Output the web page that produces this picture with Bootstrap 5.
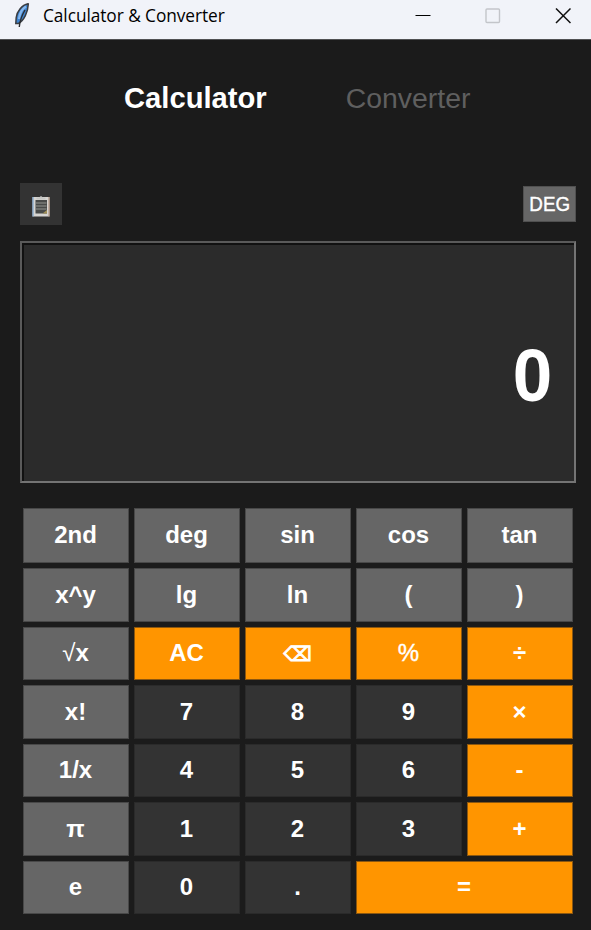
<!DOCTYPE html>
<html lang="en">
<head>
<meta charset="utf-8">
<meta name="viewport" content="width=device-width, initial-scale=1">
<title>Calculator &amp; Converter</title>
<link href="https://cdn.jsdelivr.net/npm/bootstrap@5.3.0/dist/css/bootstrap.min.css" rel="stylesheet">
<style>
  body { background: #1b1b1b; font-family: "Liberation Sans", Arial, sans-serif; color: #fff; }
  .window { height: 930px; overflow: hidden; }
  .titlebar { height: 40px; background: #f1f3f9; border-bottom: 1px solid #505154; color: #000; padding: 0 20px 8px 13px; }
  .app-title { font: 17.3px/30px "Open Sans", "Segoe UI", sans-serif; margin-left: 12px; white-space: nowrap; letter-spacing: -.06px; }
  .controls { gap: 54px; }
  .tabs { height: 58px; margin-top: 29px; padding-left: 124px; gap: 79px; }
  .tabs button { line-height: 58px; }
  .tab-current { font-size: 29.2px; }
  .tab-idle { color: #5f5f5f; font-size: 28.4px; }
  .tools { margin-top: 56px; height: 42px; padding: 0 15px 0 20px; }
  .btn-history { width: 42px; height: 42px; background: #333; }
  .btn-angle { width: 53px; height: 36px; background: #666; border: 1px solid #505050; font-size: 20px; line-height: 34px; color: #fff; }
  .btn-angle span { display: inline-block; margin: 0 -4px; transform: scaleX(.94); -webkit-text-stroke: .4px #fff; }
  .screen { margin: 16px 15px 0 20px; height: 242px; border: 2px solid; border-color: #5a5a5a #747474 #747474 #5a5a5a; background: #2b2b2b; box-shadow: inset 2px 2px 0 #111; padding-right: 22px; padding-top: 28px; font-size: 74px; line-height: 1; }
  .screen span { display: inline-block; transform: scaleX(.96); transform-origin: right; }
  .keys { display: grid; margin: 25px 18px 0 23px; grid-template-columns: repeat(5, 106px); grid-template-rows: 55px repeat(6, 53.2px); gap: 5.32px 5px; }
  .key { background: #666; border: 1px solid #484848; border-radius: 0; color: #fff; font-size: 24px; font-weight: 700; line-height: 1; padding: 0 1px 0 0; }
  .key:nth-child(-n+5) { padding-bottom: 1px; }
  .key-num { background: #333; border-color: #2a2a2a; }
  .key-op { background: #ff9500; border-color: #8b5710; }
  .key-wide { grid-column: span 2; }
  .key-percent { font-weight: 400; -webkit-text-stroke: .4px #fff; }
  .glyph-erase { font: 20px/1 "DejaVu Sans", sans-serif; -webkit-text-stroke: .9px #fff; }
</style>
<script src="https://cdn.jsdelivr.net/npm/bootstrap@5.3.0/dist/js/bootstrap.bundle.min.js"></script>
</head>
<body>
<div class="window d-flex flex-column">
  <header class="titlebar d-flex align-items-center justify-content-between flex-shrink-0">
    <div class="d-flex align-items-center">
      <svg width="18" height="26" viewBox="0 0 18 26" aria-hidden="true">
        <path d="M15 .8C9 2 4 8 3.200 14.500L2.800 20.500 5.500 20.500C11 17.500 15 9 15.300 1Z" fill="#3f83cf" stroke="#3a3d42" stroke-width="1.500"/>
        <path d="M13 3.500C9 6 6.500 11 6 16" fill="none" stroke="#86b8ee" stroke-width="2.200"/>
        <path d="M12 7C9 12 7 16 6.300 24" fill="none" stroke="#2b2d31" stroke-width="1.400"/>
      </svg>
      <span class="app-title">Calculator &amp; Converter</span>
    </div>
    <div class="controls d-flex align-items-center">
      <svg width="16" height="16" aria-hidden="true"><path d="M.5 7.500H15.500" stroke="#000"/></svg>
      <svg width="16" height="16" aria-hidden="true"><rect x="1" y="1" width="13.500" height="13.500" rx="1" fill="none" stroke="#c3c5ca" stroke-width="1.400"/></svg>
      <svg width="16" height="16" aria-hidden="true"><path d="M1 .5L15.500 15M15.500 .5L1 15" stroke="#111" stroke-width="1.500"/></svg>
    </div>
  </header>
  <nav class="tabs d-flex flex-shrink-0">
    <button class="btn p-0 border-0 fw-bold text-white tab-current">Calculator</button>
    <button class="btn p-0 border-0 tab-idle">Converter</button>
  </nav>
  <div class="tools d-flex align-items-center justify-content-between flex-shrink-0">
    <button class="btn btn-history rounded-0 border-0 p-0 pt-1 d-flex align-items-center justify-content-center" aria-label="History">
      <svg width="20" height="24" viewBox="0 0 20 24" aria-hidden="true">
        <rect x="1.500" y="3" width="17" height="19.500" fill="#d6d4d1"/>
        <path d="M2 3V22.500" stroke="#7fa6cf" stroke-width="1.200"/>
        <path d="M18 3V22.500" stroke="#b39683" stroke-width="1.200"/>
        <rect x="4.500" y="6" width="11.500" height="13.500" fill="#484a49"/>
        <path d="M5 9H15.500M5 12H15.500M5 15H15.500" stroke="#92938f" stroke-width="1.200"/>
        <path d="M11.500 19.500L16 16V19.500Z" fill="#a08f55"/>
        <path d="M5.500 5.500V3.500H8L10 2 12 3.500H14.500V5.500Z" fill="#c6c6c4"/>
      </svg>
    </button>
    <button class="btn btn-angle rounded-0 p-0"><span>DEG</span></button>
  </div>
  <output class="screen d-flex align-items-center justify-content-end fw-bold flex-shrink-0"><span>0</span></output>
  <main class="keys">
    <button class="btn key">2nd</button><button class="btn key">deg</button><button class="btn key">sin</button><button class="btn key">cos</button><button class="btn key">tan</button>
    <button class="btn key">x^y</button><button class="btn key">lg</button><button class="btn key">ln</button><button class="btn key">(</button><button class="btn key">)</button>
    <button class="btn key"><span class="fw-normal">√</span>x</button><button class="btn key key-op">AC</button><button class="btn key key-op"><span class="glyph-erase">⌫</span></button><button class="btn key key-op key-percent">%</button><button class="btn key key-op">÷</button>
    <button class="btn key">x!</button><button class="btn key key-num">7</button><button class="btn key key-num">8</button><button class="btn key key-num">9</button><button class="btn key key-op">×</button>
    <button class="btn key">1/x</button><button class="btn key key-num">4</button><button class="btn key key-num">5</button><button class="btn key key-num">6</button><button class="btn key key-op">-</button>
    <button class="btn key">π</button><button class="btn key key-num">1</button><button class="btn key key-num">2</button><button class="btn key key-num">3</button><button class="btn key key-op">+</button>
    <button class="btn key">e</button><button class="btn key key-num">0</button><button class="btn key key-num">.</button><button class="btn key key-op key-wide">=</button>
  </main>
</div>
</body>
</html>
